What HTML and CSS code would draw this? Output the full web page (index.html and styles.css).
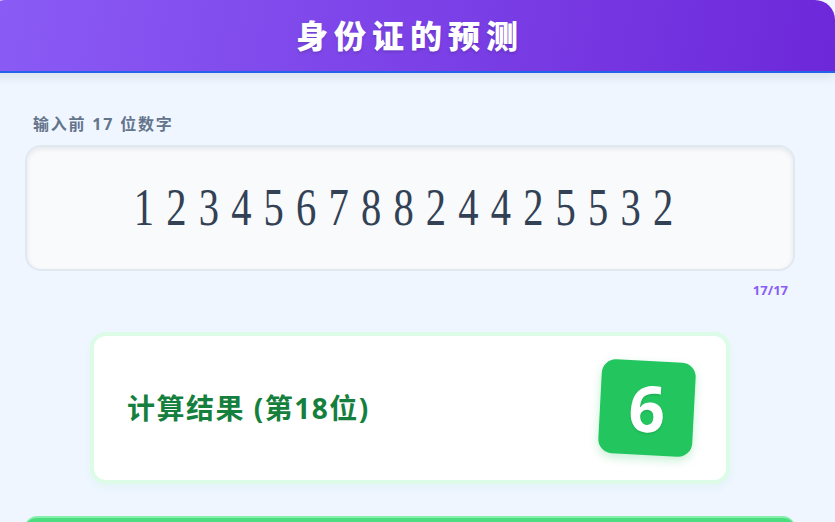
FILE: index.html
```html
<!DOCTYPE html>
<html lang="zh">
<head>
<meta charset="utf-8">
<title>身份证的预测</title>
<link rel="stylesheet" href="styles.css">
</head>
<body>
<div class="app">
  <header class="header">
    <h1 class="title">身份证的预测</h1>
  </header>
  <main class="content">
    <label class="field-label">输入前 17 位数字</label>
    <div class="id-input">
      <span class="id-digits">12345678824425532</span>
    </div>
    <div class="counter">17/17</div>
    <section class="result-card">
      <h2 class="result-label">计算结果 (第18位)</h2>
      <div class="result-badge">6</div>
    </section>
    <button class="action-btn" type="button"></button>
  </main>
</div>
</body>
</html>
```
FILE: styles.css
```css
* { box-sizing: border-box; }
html, body {
  margin: 0;
  padding: 0;
  background: #eff6ff;
  overflow: hidden;
}
body {
  font-family: "Noto Sans", "Noto Sans CJK SC", sans-serif;
  height: 522px;
}
.app {
  width: 850px;
  height: 522px;
  margin-left: -15px;
  border-radius: 20px 20px 0 0;
  background: #eff6ff;
  overflow: hidden;
}
.header {
  height: 73px;
  background: linear-gradient(100deg, #8b5cf6 0%, #6d28d9 100%);
  border-bottom: 2px solid #2563eb;
  display: flex;
  align-items: center;
  justify-content: center;
  box-shadow: 0 4px 10px rgba(30, 41, 59, 0.10);
  position: relative;
  z-index: 1;
}
.title {
  margin: 0;
  color: #ffffff;
  font-size: 32px;
  font-weight: 900;
  letter-spacing: 6px;
  line-height: 1;
  text-shadow: 0 2px 3px rgba(0, 0, 0, 0.15);
}
.content {
  padding: 40px 40px 0 40px;
  display: flex;
  flex-direction: column;
}
.field-label {
  display: block;
  margin-left: 8px;
  color: #64748b;
  font-size: 16px;
  font-weight: 700;
  letter-spacing: 1.8px;
  line-height: 22px;
}
.id-input {
  margin-top: 10px;
  height: 126px;
  border: 2px solid #e2e8f0;
  border-radius: 16px;
  background: #f8fafc;
  box-shadow: inset 0 2px 5px rgba(15, 23, 42, 0.08);
  display: flex;
  align-items: center;
  justify-content: center;
  padding-top: 0;
}
.id-digits {
  display: inline-block;
  font-family: "Liberation Serif", serif;
  font-size: 52px;
  line-height: 1;
  color: #334155;
  letter-spacing: 15.6px;
  transform: scaleX(0.78);
  margin-left: 0;
}
.counter {
  align-self: flex-end;
  margin-top: 11px;
  margin-right: 7px;
  color: #8b5cf6;
  font-size: 13px;
  font-weight: 700;
  line-height: 16px;
}
.result-card {
  margin: 34px auto 0;
  width: 640px;
  height: 152px;
  background: #ffffff;
  border: 4px solid #dcfce7;
  border-radius: 16px;
  box-shadow: 0 4px 10px rgba(34, 197, 94, 0.06);
  display: flex;
  align-items: center;
  justify-content: space-between;
  padding: 0 32px 0 33px;
}
.result-label {
  margin: 0;
  color: #15803d;
  font-size: 28px;
  font-weight: 700;
  letter-spacing: 1.5px;
  line-height: 1;
}
.result-badge {
  width: 94px;
  height: 94px;
  border-radius: 14px;
  background: #22c55e;
  color: #ffffff;
  font-family: "Noto Sans", sans-serif;
  font-size: 64px;
  font-weight: 700;
  line-height: 1;
  display: flex;
  align-items: center;
  justify-content: center;
  transform: rotate(3deg);
  box-shadow: 0 4px 10px rgba(34, 197, 94, 0.25);
  text-shadow: 0 1px 2px rgba(0, 0, 0, 0.15);
}
.action-btn {
  margin-top: 32px;
  height: 40px;
  width: 100%;
  border: none;
  border-top: 2px solid #86efac;
  border-radius: 12px;
  background: #4ade80;
}
```
